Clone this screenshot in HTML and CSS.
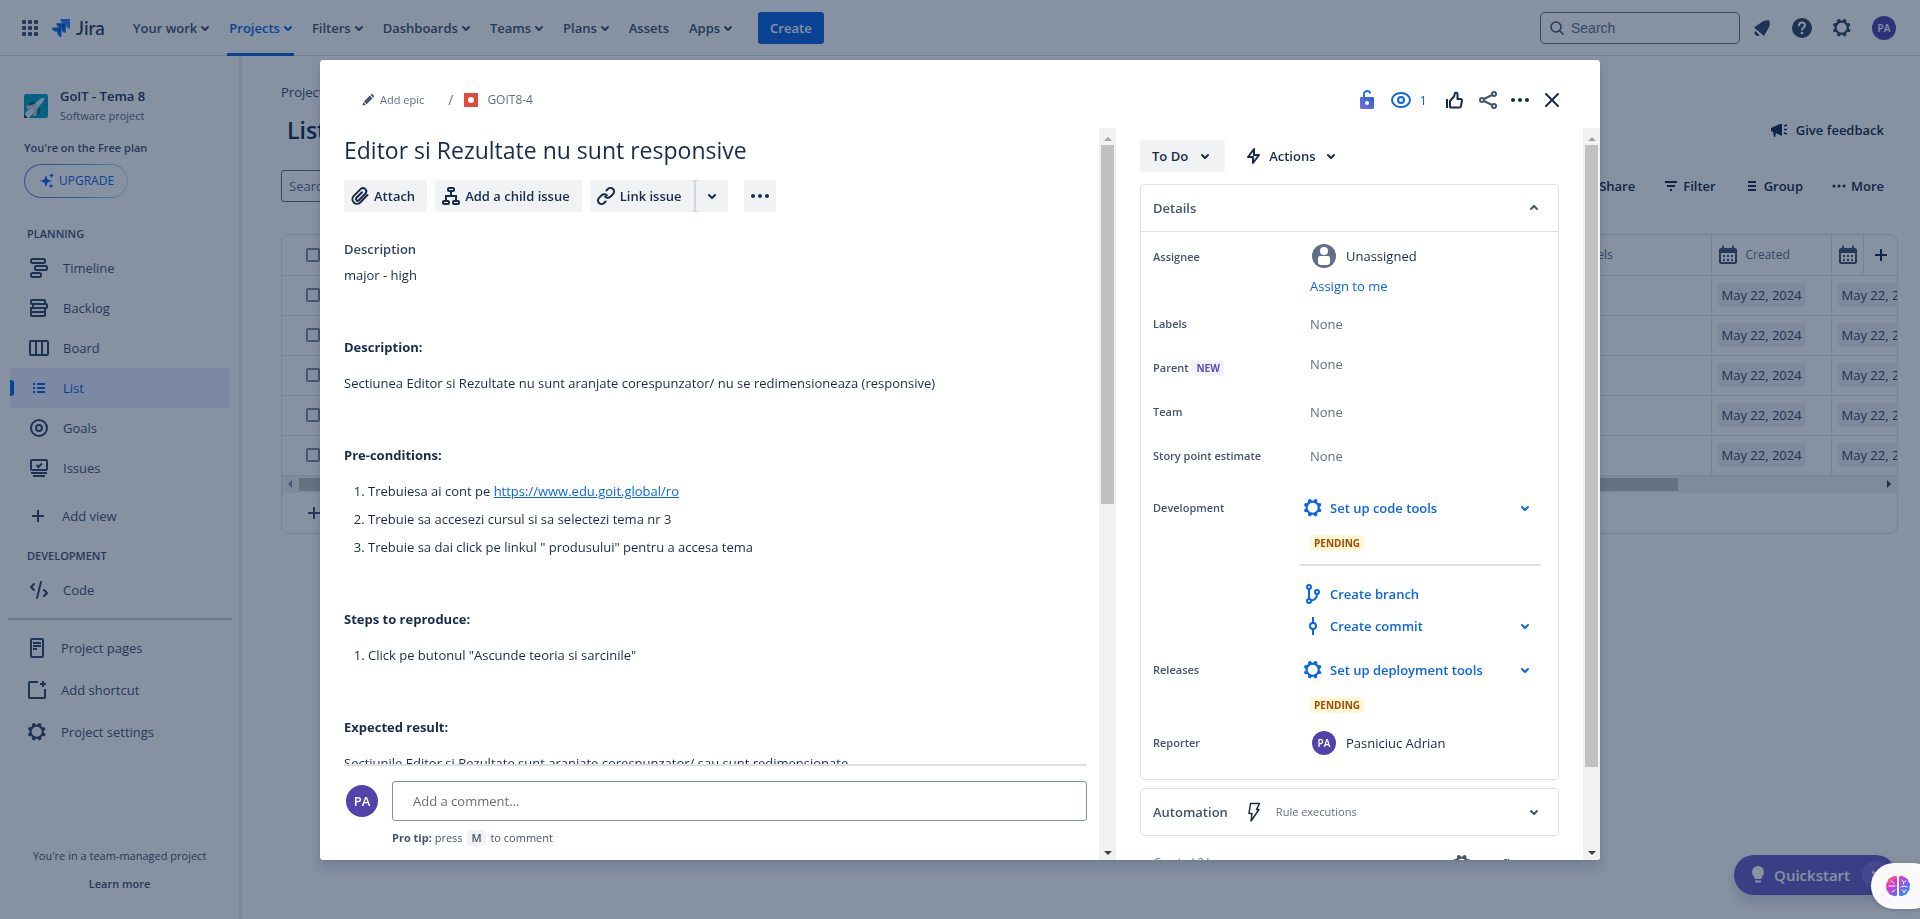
FILE: index.html
```html
<!DOCTYPE html>
<html lang="en">
<head>
<meta charset="utf-8">
<title>GOIT8-4 - Jira</title>
<link rel="stylesheet" href="styles.css">
</head>
<body>
<svg class="sprite" aria-hidden="true">
  <symbol id="chevron" viewBox="0 0 24 24"><path fill="currentColor" d="M8.292 10.293a1.009 1.009 0 000 1.419l2.939 2.965c.218.215.5.322.779.322s.556-.107.769-.322l2.93-2.955a1.01 1.01 0 000-1.419.987.987 0 00-1.406 0l-2.298 2.317-2.307-2.327a.99.99 0 00-1.406 0z"/></symbol>
  <symbol id="gear" viewBox="0 0 24 24"><path fill="currentColor" fill-rule="evenodd" d="M11.701 16.7a5.002 5.002 0 110-10.003 5.002 5.002 0 010 10.004m8.368-3.117a1.995 1.995 0 01-1.346-1.885c0-.876.563-1.613 1.345-1.885a.48.48 0 00.315-.574 8.947 8.947 0 00-.836-1.993.477.477 0 00-.598-.195 2.04 2.04 0 01-1.29.08 1.988 1.988 0 01-1.404-1.395 2.04 2.04 0 01.076-1.297.478.478 0 00-.196-.597 8.98 8.98 0 00-1.975-.826.479.479 0 00-.574.314 1.995 1.995 0 01-1.885 1.346 1.994 1.994 0 01-1.884-1.345.482.482 0 00-.575-.315c-.708.2-1.379.485-2.004.842a.47.47 0 00-.198.582A2.002 2.002 0 014.445 7.06a.478.478 0 00-.595.196 8.946 8.946 0 00-.833 1.994.48.48 0 00.308.572 1.995 1.995 0 011.323 1.877c0 .867-.552 1.599-1.324 1.877a.479.479 0 00-.308.57 8.99 8.99 0 00.723 1.79.477.477 0 00.624.194c.595-.273 1.343-.264 2.104.238.117.077.225.185.302.3.527.8.512 1.58.198 2.188a.473.473 0 00.168.628 8.946 8.946 0 002.11.897.474.474 0 00.57-.313 1.995 1.995 0 011.886-1.353c.878 0 1.618.567 1.887 1.353a.475.475 0 00.57.313 8.964 8.964 0 002.084-.883.473.473 0 00.167-.631c-.318-.608-.337-1.393.191-2.195.077-.116.185-.225.302-.302.772-.511 1.527-.513 2.125-.23a.477.477 0 00.628-.19 8.925 8.925 0 00.728-1.793.478.478 0 00-.314-.573"/></symbol>
  <symbol id="dots" viewBox="0 0 24 24"><g fill="currentColor"><circle cx="5" cy="12" r="2"/><circle cx="12" cy="12" r="2"/><circle cx="19" cy="12" r="2"/></g></symbol>
  <symbol id="plus" viewBox="0 0 24 24"><path d="M12 6v12M6 12h12" fill="none" stroke="currentColor" stroke-width="2"/></symbol>
  <symbol id="calendar" viewBox="0 0 24 24"><path fill="currentColor" fill-rule="evenodd" d="M5 5h1V3.500a1 1 0 012 0V5h8V3.500a1 1 0 012 0V5h1a2 2 0 012 2v12a2 2 0 01-2 2H5a2 2 0 01-2-2V7a2 2 0 012-2zm0 5v9h14v-9zm2 2h2v2H7zm4 0h2v2h-2zm4 0h2v2h-2zm-8 4h2v2H7zm4 0h2v2h-2zm4 0h2v2h-2z"/></symbol>
</svg>

<div class="app">
  <header class="topnav">
    <svg class="icon" viewBox="0 0 24 24" fill="#44546f"><rect x="4" y="4" width="4" height="4" rx="1"/><rect x="10" y="4" width="4" height="4" rx="1"/><rect x="16" y="4" width="4" height="4" rx="1"/><rect x="4" y="10" width="4" height="4" rx="1"/><rect x="10" y="10" width="4" height="4" rx="1"/><rect x="16" y="10" width="4" height="4" rx="1"/><rect x="4" y="16" width="4" height="4" rx="1"/><rect x="10" y="16" width="4" height="4" rx="1"/><rect x="16" y="16" width="4" height="4" rx="1"/></svg>
    <a class="brand" href="#">
      <svg width="18" height="18" viewBox="0 0 18 18"><defs><linearGradient id="lg" x1="1" y1="0" x2="0" y2="1"><stop offset="0" stop-color="#0052cc"/><stop offset="1" stop-color="#2684ff"/></linearGradient></defs><path fill="#2684ff" d="M8.500 0H18v9.500a4 4 0 01-4-4V4.300h-1.500a4 4 0 01-4-4z"/><path fill="url(#lg)" d="M4.300 4.300h9.400v9.400a4 4 0 01-4-4V8.400H8.400a4 4 0 01-4.100-4.100z"/><path fill="url(#lg)" d="M0 8.500h9.400V18a4 4 0 01-4.100-4v-1.500H4a4 4 0 01-4-4z"/></svg>
      <span>Jira</span>
    </a>
    <nav class="mainmenu">
      <a href="#">Your work<svg><use href="#chevron"/></svg></a>
      <a href="#" class="current">Projects<svg><use href="#chevron"/></svg></a>
      <a href="#">Filters<svg><use href="#chevron"/></svg></a>
      <a href="#">Dashboards<svg><use href="#chevron"/></svg></a>
      <a href="#">Teams<svg><use href="#chevron"/></svg></a>
      <a href="#">Plans<svg><use href="#chevron"/></svg></a>
      <a href="#">Assets</a>
      <a href="#">Apps<svg><use href="#chevron"/></svg></a>
    </nav>
    <button class="create">Create</button>
    <div class="tools">
      <label class="search"><svg class="icon" viewBox="0 0 24 24" fill="none" stroke="#44546f" stroke-width="1.500"><circle cx="11" cy="11" r="5"/><path d="M15 15l3 3" stroke-linecap="round"/></svg><input type="text" placeholder="Search" aria-label="Search"></label>
      <div class="toolicons">
        <svg class="icon" viewBox="0 0 24 24" fill="#344563"><path d="M4 11.500L13 5.200q3-1.500 6.500-.8 1 3-.4 6.600L14 20z"/><path d="M5.500 15l4 4a2.800 2.800 0 01-4-4z"/></svg>
        <svg class="icon" viewBox="0 0 24 24"><circle cx="12" cy="12" r="10" fill="#344563"/><path d="M9 9.500a3 3 0 116 0c0 2-3 2-3 4.300" fill="none" stroke="#fff" stroke-width="2" stroke-linecap="round"/><circle cx="12" cy="17" r="1.300" fill="#fff"/></svg>
        <svg class="icon slate"><use href="#gear"/></svg>
        <span class="avatar">PA</span>
      </div>
    </div>
  </header>

  <div class="workspace">
    <aside class="sidebar">
      <div class="project">
        <svg width="24" height="24" viewBox="0 0 24 24"><rect width="24" height="24" rx="2" fill="#00a3bf"/><path d="M0 24L2 18 15 6q4-3 5-2 1 1-2 5L5 24z" fill="#deebff"/><path d="M2 12l11-2-3 4-7 1zM12 22l2-11-4 4-1 7z" fill="#c1c7d0"/><path d="M5 9l5-1 1 1-5 2zM14 20l1-6 1 1-1 5z" fill="#253858"/><path d="M0 20l4 4H0z" fill="#253858"/></svg>
        <div><strong>GoIT - Tema 8</strong><small>Software project</small></div>
      </div>
      <p class="plan">You're on the Free plan</p>
      <button class="upgrade"><svg width="16" height="16" viewBox="0 0 16 16" fill="#0c66e4"><path d="M7 2l1.600 4.400L13 8l-4.400 1.600L7 14 5.400 9.600 1 8l4.400-1.600z"/><path d="M12.500 0l.8 1.700 1.700.8-1.700.8-.8 1.700-.8-1.700-1.700-.8 1.700-.8zM12 10.500l.7 1.800 1.800.7-1.800.7-.7 1.800-.7-1.800-1.800-.7 1.800-.7z"/></svg>UPGRADE</button>
      <h2 class="planning">PLANNING</h2>
      <nav class="sidemenu">
        <a href="#"><svg viewBox="0 0 24 24" fill="none" stroke="currentColor" stroke-width="2"><rect x="4" y="3" width="14" height="4" rx="1.500"/><rect x="8" y="10" width="12" height="4" rx="1.500"/><rect x="4" y="17" width="10" height="4" rx="1.500"/></svg>Timeline</a>
        <a href="#"><svg viewBox="0 0 24 24" fill="none" stroke="currentColor" stroke-width="2"><rect x="4" y="4" width="14" height="4" rx="1"/><rect x="6" y="8" width="14" height="4" rx="1"/><path d="M4 12h14v7a1 1 0 01-1 1H5a1 1 0 01-1-1zM4 16h14"/></svg>Backlog</a>
        <a href="#"><svg viewBox="0 0 24 24" fill="none" stroke="currentColor" stroke-width="2"><rect x="3" y="5" width="18" height="14" rx="1"/><path d="M9 5v14M15 5v14"/></svg>Board</a>
        <a href="#" class="selected"><svg viewBox="0 0 24 24" fill="none" stroke="currentColor" stroke-width="2"><path d="M10 8h8M10 12h8M10 16h8M6 8h2M6 12h2M6 16h2"/></svg>List</a>
        <a href="#"><svg viewBox="0 0 24 24" fill="none" stroke="currentColor" stroke-width="2"><circle cx="12" cy="12" r="8"/><circle cx="12" cy="12" r="3"/></svg>Goals</a>
        <a href="#"><svg viewBox="0 0 24 24" fill="none" stroke="currentColor" stroke-width="2"><rect x="4" y="4" width="16" height="10" rx="1"/><path d="M9.500 9l2 2 3.500-3.500M4 17h16M6 20h12"/></svg>Issues</a>
        <a href="#" class="addview"><svg><use href="#plus"/></svg>Add view</a>
      </nav>
      <h2>DEVELOPMENT</h2>
      <nav class="sidemenu code">
        <a href="#"><svg viewBox="0 0 24 24" fill="none" stroke="currentColor" stroke-width="2" stroke-linecap="round"><path d="M7 6L4 9l3 3M17 12l3 3-3 3M14 4L10 20"/></svg>Code</a>
      </nav>
      <hr>
      <nav class="sidemenu shortcuts">
        <a href="#"><svg viewBox="0 0 24 24" fill="none" stroke="currentColor" stroke-width="2"><rect x="6" y="3" width="12" height="18" rx="1"/><path d="M8 7h8M8 10h8M8 13h4"/></svg>Project pages</a>
        <a href="#"><svg viewBox="0 0 24 24" fill="none" stroke="currentColor" stroke-width="2"><path d="M13 4H5a1 1 0 00-1 1v14a1 1 0 001 1h14a1 1 0 001-1v-8M18 3v6M15 6h6"/></svg>Add shortcut</a>
        <a href="#"><svg><use href="#gear"/></svg>Project settings</a>
      </nav>
      <footer><p>You're in a team-managed project</p><a href="#">Learn more</a></footer>
    </aside>

    <main class="list">
      <div class="crumb">Projects</div>
      <div class="listhead"><h1>List</h1>
        <button class="plain"><svg class="icon" viewBox="0 0 24 24" fill="#172b4d"><path d="M4 10l9-4h2v12l-2-1-9-4z"/><path d="M6 14l3 1-1 4H7z"/><path d="M17 8l3-1M17 11.500h3M17 15l3 1" stroke="#172b4d" stroke-width="1.500"/></svg>Give feedback</button>
      </div>
      <div class="toolbar">
        <input type="text" placeholder="Search list" aria-label="Search list">
        <div class="actions">
          <button class="plain">Share</button>
          <button class="plain"><svg viewBox="0 0 24 24"><path d="M6 8h12M8 12h8M11 16h2" stroke="currentColor" stroke-width="2"/></svg>Filter</button>
          <button class="plain"><svg viewBox="0 0 24 24"><path d="M8 8h8M8 12h8M8 16h8" stroke="currentColor" stroke-width="2"/></svg>Group</button>
          <button class="plain"><svg viewBox="0 0 24 24" fill="currentColor"><circle cx="7" cy="12" r="1.500"/><circle cx="12" cy="12" r="1.500"/><circle cx="17" cy="12" r="1.500"/></svg>More</button>
        </div>
      </div>
      <div class="gridbox">
        <button class="addcol" aria-label="Add column"><svg class="icon"><use href="#plus"/></svg></button>
        <table>
          <thead><tr><th class="check"><input type="checkbox" aria-label="Select all"></th><th></th><th class="labels">Labels</th><th class="date"><span><svg class="icon"><use href="#calendar"/></svg>Created</span></th><th class="date"><span><svg class="icon"><use href="#calendar"/></svg></span></th></tr></thead>
          <tbody>
            <tr><td><input type="checkbox" aria-label="Select row 1"></td><td></td><td></td><td><span class="day">May 22, 2024</span></td><td><span class="day">May 22, 2024</span></td></tr>
            <tr><td><input type="checkbox" aria-label="Select row 2"></td><td></td><td></td><td><span class="day">May 22, 2024</span></td><td><span class="day">May 22, 2024</span></td></tr>
            <tr><td><input type="checkbox" aria-label="Select row 3"></td><td></td><td></td><td><span class="day">May 22, 2024</span></td><td><span class="day">May 22, 2024</span></td></tr>
            <tr><td><input type="checkbox" aria-label="Select row 4"></td><td></td><td></td><td><span class="day">May 22, 2024</span></td><td><span class="day">May 22, 2024</span></td></tr>
            <tr><td><input type="checkbox" aria-label="Select row 5"></td><td></td><td></td><td><span class="day">May 22, 2024</span></td><td><span class="day">May 22, 2024</span></td></tr>
          </tbody>
        </table>
        <div class="hscroll"><i class="left"></i><b></b><i class="right"></i></div>
        <button class="addrow" aria-label="Create issue"><svg class="icon"><use href="#plus"/></svg></button>
      </div>
    </main>
  </div>
  <button class="quickstart"><svg width="24" height="24" viewBox="0 0 24 24" fill="#fff"><path d="M12 3a6 6 0 016 6c0 2.500-1.500 3.500-2.200 5.500-.2.900-.6 1.500-1.300 1.500h-5c-.7 0-1.100-.6-1.300-1.500C7.500 12.500 6 11.500 6 9a6 6 0 016-6zM9 17.500h6v1.500q0 .5-.5.500h-5q-.5 0-.5-.5z"/></svg>Quickstart<span><svg width="24" height="24" viewBox="0 0 24 24"><path d="M8.500 8.500l7 7M15.500 8.500l-7 7" stroke="#fff" stroke-width="2.500"/></svg></span></button>
</div>

<div class="blanket">
  <section class="modal" role="dialog" aria-label="GOIT8-4">
    <header class="modalhead">
      <div class="path">
        <a href="#" class="epic"><svg width="16" height="16" viewBox="0 0 16 16" fill="#44546f"><path d="M3.300 9.600L10 2.900l3.200 3.200-6.700 6.700zM10.800 2.100l.6-.6a1.300 1.300 0 011.800 0l1.400 1.400a1.300 1.300 0 010 1.800l-.6.600zM2.800 10.500l2.800 2.800-3.600 1.100a.4.400 0 01-.4-.4z"/></svg>Add epic</a>
        <span>/</span>
        <svg width="14" height="14" viewBox="0 0 14 14"><rect width="14" height="14" rx="1" fill="#e5493a"/><circle cx="7" cy="7" r="3" fill="#fff"/></svg>
        <a href="#" class="key">GOIT8-4</a>
      </div>
      <div class="headtools">
        <button aria-label="Restrictions"><svg class="icon" viewBox="0 0 24 24"><defs><linearGradient id="lk" x1="1" y1="0" x2="0" y2="1"><stop offset=".2" stop-color="#3367d6"/><stop offset="1" stop-color="#7f6bdc"/></linearGradient></defs><path d="M9 11V6a3.200 3.200 0 016.300-.6" fill="none" stroke="#2f6fe4" stroke-width="2"/><path fill="url(#lk)" fill-rule="evenodd" d="M6 9h12a1 1 0 011 1v9.500a1.500 1.500 0 01-1.500 1.500h-11A1.500 1.500 0 015 19.500V10a1 1 0 011-1zm6 4a2 2 0 100 4 2 2 0 000-4z"/></svg></button>
        <button class="watch" aria-label="Watchers"><svg class="icon" viewBox="0 0 24 24" fill="none" stroke="currentColor" stroke-width="2"><ellipse cx="12" cy="12" rx="9" ry="7"/><circle cx="12" cy="12" r="3"/></svg>1</button>
        <button aria-label="Vote"><svg class="icon" viewBox="0 0 24 24" fill="none" stroke="currentColor" stroke-width="2" stroke-linejoin="round"><path d="M8 19V13l4-4.500 1-3.500q2-1 2.500 1V11h3a1.500 1.500 0 011.500 1.800l-1 5q-.3 1.700-1.500 1.700H9z"/><path d="M5 11v9"/></svg></button>
        <button class="soft" aria-label="Share"><svg class="icon" viewBox="0 0 24 24" fill="none" stroke="currentColor" stroke-width="2"><circle cx="6" cy="12" r="2"/><circle cx="18" cy="6" r="2"/><circle cx="18" cy="18" r="2"/><path d="M8 11l8-4M8 13l8 4"/></svg></button>
        <button aria-label="Actions"><svg class="icon"><use href="#dots"/></svg></button>
        <button aria-label="Close"><svg class="icon" viewBox="0 0 24 24" fill="none" stroke="currentColor" stroke-width="2" stroke-linecap="round"><path d="M6 6l12 12M18 6L6 18"/></svg></button>
      </div>
    </header>

    <div class="modalbody">
      <div class="issue">
        <div class="issuescroll">
          <h1>Editor si Rezultate nu sunt responsive</h1>
          <div class="quick">
            <button class="gray"><svg class="icon" viewBox="0 0 24 24" fill="none" stroke="currentColor" stroke-width="2" stroke-linecap="round"><path d="M19.500 11l-7.300 7.500a4.600 4.600 0 01-6.600-6.400l7.200-7.200a3.300 3.300 0 014.700 4.600l-6.700 6.800a1.700 1.700 0 01-2.500-2.300l5.700-5.800"/></svg>Attach</button>
            <button class="gray"><svg class="icon" viewBox="0 0 24 24" fill="none" stroke="currentColor" stroke-width="2"><rect x="9" y="4" width="6" height="3" rx="1"/><rect x="4" y="17" width="6" height="3" rx="1"/><rect x="14" y="17" width="6" height="3" rx="1"/><path d="M12 7v5M7 17v-5h10v5"/></svg>Add a child issue</button>
            <div class="split"><button class="gray"><svg class="icon" viewBox="0 0 24 24" fill="none" stroke="currentColor" stroke-width="2" stroke-linecap="round"><path d="M12.800 11.200a3.600 3.600 0 00-5.100 0L5 13.900a3.600 3.600 0 005.100 5.100l1.500-1.500"/><path d="M11.200 12.800a3.600 3.600 0 005.100 0L19 10.100A3.600 3.600 0 0013.900 5l-1.500 1.500"/></svg>Link issue</button><button class="gray caret" aria-label="Link options"><svg class="icon"><use href="#chevron"/></svg></button></div>
            <button class="gray more" aria-label="More"><svg class="icon"><use href="#dots"/></svg></button>
          </div>
          <h2>Description</h2>
          <div class="doc">
            <p>major - high</p><p></p>
            <p><strong>Description:</strong></p>
            <p>Sectiunea Editor si Rezultate nu sunt aranjate corespunzator/ nu se redimensioneaza (responsive)</p><p></p>
            <p><strong>Pre-conditions:</strong></p>
            <ol><li>Trebuiesa ai cont pe <a href="#">https://www.edu.goit.global/ro</a></li><li>Trebuie sa accesezi cursul si sa selectezi tema nr 3</li><li>Trebuie sa dai click pe linkul " produsului" pentru a accesa tema</li></ol><p></p>
            <p><strong>Steps to reproduce:</strong></p>
            <ol><li>Click pe butonul "Ascunde teoria si sarcinile"</li></ol><p></p>
            <p><strong>Expected result:</strong></p>
            <p>Sectiunile Editor si Rezultate sunt aranjate corespunzator/ sau sunt redimensionate</p>
          </div>
        </div>
        <div class="comment">
          <span class="avatar big">PA</span>
          <div><input type="text" placeholder="Add a comment…" aria-label="Add a comment"><p><b>Pro tip:</b> press <kbd>M</kbd> to comment</p></div>
        </div>
      </div>
      <div class="vscroll"><i class="up"></i><b class="short"></b><i class="down"></i></div>

      <div class="side">
        <div class="status"><button class="gray">To Do<svg><use href="#chevron"/></svg></button><button class="plain"><svg class="icon" viewBox="0 0 24 24" fill="none" stroke="currentColor" stroke-width="2" stroke-linejoin="round"><path d="M13 5l-6 8h5v6l6-8h-5z"/></svg>Actions<svg><use href="#chevron"/></svg></button></div>
        <section class="card">
          <button class="cardhead">Details<svg class="flip"><use href="#chevron"/></svg></button>
          <div class="fields">
            <div class="row assignee"><h3>Assignee</h3><div><p class="person"><svg class="icon" viewBox="0 0 24 24"><circle cx="12" cy="12" r="12" fill="#626f86"/><circle cx="12" cy="7" r="4" fill="#fff"/><path d="M6 14a2 2 0 012-2h8a2 2 0 012 2v4a3 3 0 01-3 3H9a3 3 0 01-3-3z" fill="#fff"/></svg>Unassigned</p><a href="#" class="me">Assign to me</a></div></div>
            <div class="row"><h3>Labels</h3><p class="none">None</p></div>
            <div class="row"><h3>Parent <span class="new">NEW</span></h3><p class="none raised">None</p></div>
            <div class="row"><h3>Team</h3><p class="none">None</p></div>
            <div class="row"><h3>Story point estimate</h3><p class="none">None</p></div>
            <div class="row dev"><h3>Development</h3><div>
              <button class="tool"><svg class="icon"><use href="#gear"/></svg><span>Set up code tools</span><svg class="end"><use href="#chevron"/></svg></button>
              <span class="pending">PENDING</span>
              <hr>
              <button class="tool"><svg class="icon" viewBox="0 0 24 24" fill="none" stroke="currentColor" stroke-width="2"><circle cx="8" cy="5" r="2"/><circle cx="8" cy="19" r="2"/><circle cx="16" cy="10" r="2"/><path d="M8 7v10M16 12q0 6-6 6.500"/></svg><span>Create branch</span></button>
              <button class="tool"><svg class="icon" viewBox="0 0 24 24" fill="none" stroke="currentColor" stroke-width="2"><circle cx="12" cy="12" r="3"/><path d="M12 3v6M12 15v6"/></svg><span>Create commit</span><svg class="end"><use href="#chevron"/></svg></button>
            </div></div>
            <div class="row rel"><h3>Releases</h3><div><button class="tool"><svg class="icon"><use href="#gear"/></svg><span>Set up deployment tools</span><svg class="end"><use href="#chevron"/></svg></button><span class="pending">PENDING</span></div></div>
            <div class="row rep"><h3>Reporter</h3><p class="person"><span class="avatar">PA</span>Pasniciuc Adrian</p></div>
          </div>
        </section>
        <button class="card auto"><span>Automation</span><svg class="icon bolt" viewBox="0 0 24 24" fill="none" stroke="#172b4d" stroke-width="1.500" stroke-linejoin="round"><path d="M8.500 3.500h9l-3 6H17L9 21l1-7.500H7z"/></svg><small>Rule executions</small><svg class="end"><use href="#chevron"/></svg></button>
        <footer class="meta"><span>Created 2 hours ago</span><button class="plain"><svg class="icon"><use href="#gear"/></svg>Configure</button></footer>
      </div>
      <div class="vscroll"><i class="up"></i><b class="long"></b><i class="down"></i></div>
    </div>
  </section>
</div>

<button class="assistant" aria-label="Assistant"><svg width="26" height="24" viewBox="0 0 26 24"><defs><linearGradient id="br" x1="0" y1="0" x2="1" y2="1"><stop offset="0" stop-color="#ff8a2b"/><stop offset=".3" stop-color="#e934c8"/><stop offset=".6" stop-color="#7a5cf5"/><stop offset="1" stop-color="#17a8f5"/></linearGradient></defs><path fill="url(#br)" d="M12 2.500v19q-3 1.500-5.500-.5-3-.3-3.300-3.500Q.5 16 1.500 13q-1.500-3 1-5 0-3.500 3.500-4.500 2.500-2.500 6-1zM14 2.500v19q3 1.500 5.500-.5 3-.3 3.300-3.500Q25.500 16 24.500 13q1.500-3-1-5 0-3.500-3.500-4.500-2.500-2.500-6-1z"/><path d="M4 12h6M6 7l3 2M7 18l3-2M17 6l1.500 2.500L21 7M18.500 8.500V10M16 13l3-1 3 1M17 16l2 1.500 2-1.500M19 17.500V19" fill="none" stroke="#fff" stroke-width="1" stroke-linecap="round"/></svg></button>
</body>
</html>
```

FILE: styles.css
```css
*{box-sizing:border-box}
body{margin:0;font:13px/20px "Open Sans","Noto Sans",sans-serif;color:#172b4d;background:#fff}
h1,h2,h3,p,ol{margin:0;padding:0;font-size:inherit}
a{color:inherit;text-decoration:none}
button,input{font:inherit;color:inherit;border:0;background:none;padding:0;margin:0}
button{display:flex;align-items:center;font-weight:600;white-space:nowrap}
hr{border:0;margin:0}
svg{flex:none;width:24px;height:24px;display:block}
.sprite{display:none}
.slate{color:#344563}
.avatar{display:flex;align-items:center;justify-content:center;flex:none;width:24px;height:24px;border-radius:50%;background:#5243aa;color:#fff;font-size:10px;font-weight:600}
.avatar.big{width:32px;height:32px;font-size:13px}

.app{display:flex;flex-direction:column;height:100vh;overflow:hidden}
.topnav{display:flex;align-items:center;height:56px;flex:none;padding:0 24px 0 18px;border-bottom:1px solid #dcdfe4;color:#44546f}
.brand{display:flex;align-items:center;gap:6px;margin-left:10px;font:500 19px/24px Lato,sans-serif;color:#253858}
.brand svg{width:18px;height:18px}
.mainmenu{display:flex;gap:16px;margin-left:26px;height:56px;font-weight:600}
.mainmenu a{display:flex;align-items:center;padding:0 2px;white-space:nowrap}
.mainmenu svg{margin:0 -8px 0 -4px}
.mainmenu .current{color:#0c66e4;border-bottom:3px solid #0c66e4;padding-top:3px}
.create{height:32px;margin-left:24px;padding:0 12px;border-radius:3px;background:#0c66e4;color:#fff}
.tools{display:flex;align-items:center;margin-left:auto;gap:10px}
.search{display:flex;align-items:center;width:200px;height:32px;border:1px solid #626f86;border-radius:5px;padding-left:4px}
.search input{width:150px;margin-left:2px;font:14px "Liberation Sans",sans-serif}
input::placeholder{color:#626f86;opacity:1}
.toolicons{display:flex;align-items:center;gap:16px}
.toolicons .avatar{margin-left:2px}

.workspace{display:flex;flex:1;min-height:0}
.sidebar{display:flex;flex-direction:column;width:242px;flex:none;border-right:3px solid #edeff2;color:#44546f;padding-top:29px}
.project{display:flex;align-items:center;gap:12px;padding-left:24px;height:42px}
.project strong,.project small{display:block}
.project strong{font-weight:600;color:#253858}
.project small{font-size:11px;color:#626f86}
.plan{padding:11px 0 0 24px;font-size:11px;font-weight:600}
.upgrade{align-self:flex-start;margin:6px 0 0 24px;height:34px;padding:0 13px 0 14px;gap:4px;border:1px solid transparent;border-radius:17px;font-size:12px;font-weight:400;color:#0c66e4;background:linear-gradient(#fff,#fff) padding-box,linear-gradient(90deg,#8b6be8,#4c9aff,#c6e6ff) border-box}
.upgrade svg{width:16px;height:16px}
.sidebar h2{padding-left:27px;font-size:11px;line-height:16px;font-weight:600}
.sidebar .planning{margin:28px 0 6px}
.sidemenu{padding:0 9px 0 10px}
.sidemenu a{position:relative;display:flex;align-items:center;gap:12px;height:40px;padding-left:17px;border-radius:3px}
.sidemenu svg{color:#344563}
.sidemenu .selected,.sidemenu .selected svg{color:#0c66e4}
.sidemenu .selected{background:#e9f2ff}
.selected::before{content:"";position:absolute;left:0;top:12px;width:4px;height:16px;background:#0c66e4;border-radius:0 3px 3px 0}
.sidemenu .addview{margin:8px 0 12px;padding-left:16px}
.sidemenu.code{padding-top:6px;padding-bottom:8px}
.sidebar hr{height:2px;margin:0 7px 0 8px;background:#cfd4dc}
.shortcuts{padding-top:7px}
.shortcuts a{height:42px;padding-left:15px}
.sidebar footer{margin-top:auto;padding-bottom:25px;text-align:center;font-size:11px}
.sidebar footer a{display:block;margin-top:8px;font-weight:600}

.list{flex:1;min-width:0;padding:26px 22px 0 39px}
.crumb{color:#44546f}
.listhead{display:flex;justify-content:space-between;align-items:center;height:32px;margin-top:12px;padding:0 14px 0 6px}
.listhead h1{font-size:23px;font-weight:600}
.listhead .plain{gap:5px}
.toolbar{display:flex;justify-content:space-between;margin-top:24px;padding-right:14px}
.toolbar input{width:180px;height:32px;border:1px solid #626f86;border-radius:3px;padding:0 7px;color:#626f86}
.actions{display:flex;gap:24px}
.gridbox{position:relative;margin-top:32px;border:1px solid #dfe1e6;border-radius:8px;overflow:hidden}
.gridbox table{width:calc(100% + 54px);table-layout:fixed;border-collapse:collapse}
.gridbox th,.gridbox td{height:40px;padding:0 6px;border-bottom:1px solid #e4e7eb;text-align:left;font-weight:500;white-space:nowrap}
.gridbox thead th{font-size:12px;color:#626f86}
.gridbox .check{width:48px}
.gridbox .labels{width:146px;padding-left:12px}
.gridbox .date{width:120px}
.gridbox th:nth-child(n+4),.gridbox td:nth-child(n+4){border-left:1px solid #e4e7eb}
.gridbox th span{display:flex;align-items:center;gap:6px;margin-left:-2px}
.gridbox th svg{color:#44546f}
.gridbox input[type=checkbox]{appearance:none;display:block;width:14px;height:14px;margin-left:18px;border:2px solid #8590a2;border-radius:2px}
.day{display:inline-block;height:24px;padding:2px 4px;border-radius:3px;background:#f0f1f4;color:#344563;font-weight:400}
.addcol{position:absolute;right:0;top:0;width:34px;height:40px;justify-content:center;background:#fff;border-left:1px solid #e4e7eb}
.hscroll{display:flex;align-items:center;height:17px;background:#f1f1f1;padding:0 6px}
.hscroll b{height:13px;width:86%;margin-left:7px;background:#c1c1c1}
.hscroll .right{margin-left:auto}
.hscroll i,.vscroll i{width:0;height:0;border:4px solid transparent}
.hscroll .left{border-right-color:#8590a2;border-left:0}
.hscroll .right{border-left-color:#404040;border-right:0}
.addrow{height:40px;padding-left:20px;color:#44546f}
.quickstart{position:absolute;right:24px;bottom:24px;height:40px;padding:0 6px 0 12px;gap:4px;border-radius:20px;background:#6e5dc6;color:#fff;font-size:15px;box-shadow:0 8px 12px #091e4226}
.quickstart span{display:flex;margin-left:8px;border-radius:50%;background:#8270db;padding:2px}

.blanket{position:fixed;inset:0;display:flex;justify-content:center;padding:60px 60px 59px;background:rgba(9,30,66,.49)}
.modal{display:flex;flex-direction:column;width:100%;max-width:1280px;background:#fff;border-radius:3px;overflow:hidden;box-shadow:0 8px 12px #091e4226,0 0 1px #091e424f}
.modalhead{display:flex;justify-content:space-between;align-items:center;height:68px;flex:none;padding:12px 36px 0 41px}
.path{display:flex;align-items:center;font-size:11px;color:#626f86}
.path svg{width:14px;height:14px}
.path .epic{display:flex;align-items:center;gap:5px}
.path span{margin:0 11px 0 24px;font-size:14px}
.path .key{margin-left:9px;font-size:12px}
.headtools{display:flex;gap:8px}
.headtools .watch{gap:7px;margin:0 7px 0 2px;color:#0c66e4;font-weight:400}
.headtools .soft{margin:0 0 0 2px;color:#44546f}
.modalbody{display:grid;grid-template-columns:minmax(0,779fr) 17px minmax(0,467fr) 17px;grid-template-rows:minmax(0,1fr);flex:1;min-height:0}
.issue{display:flex;flex-direction:column;min-height:0;padding:0 12px 0 24px}
.issuescroll{flex:1;min-height:0;overflow:hidden;padding-top:8px}
.issue h1{font-size:23px;line-height:28px;font-weight:500}
.quick{display:flex;gap:8px;margin-top:16px}
.gray{height:32px;padding:0 12px 0 4px;gap:2px;border-radius:3px;background:#f1f2f4}
.split{display:flex;gap:2px;background:#d0d4db;border-radius:3px}
.quick .caret,.quick .more{width:32px;padding:0;justify-content:center}
.quick .more{margin-left:8px}
.issue h2{margin:27px 0 4px;font-weight:600;color:#344563}
.doc p,.doc li{min-height:24px;line-height:24px}
.doc p+p,.doc ol,.doc ol+p{margin-top:12px}
.doc ol{padding-left:24px}
.doc li+li{margin-top:4px}
.doc a{color:#0c66e4;text-decoration:underline}
.doc strong{font-weight:700}
.comment{display:flex;gap:14px;height:96px;flex:none;border-top:2px solid #dcdfe4;padding:15px 0 0 2px}
.comment>div{flex:1}
.comment .avatar{margin-top:4px}
.comment input{display:block;width:100%;height:40px;border:1px solid #8590a2;border-radius:3px;padding:0 20px}
.comment input::placeholder{color:#6b6e76}
.comment p{margin-top:7px;font-size:11px;color:#44546f}
.comment kbd{display:inline-block;margin:0 2px;padding:0 4px;border-radius:3px;background:#f1f2f4;font:600 11px/16px "Open Sans",sans-serif}
.vscroll{display:flex;flex-direction:column;align-items:center;background:#f1f1f1}
.vscroll .up{margin:5px 0 4px;border-bottom-color:#a3a3a3;border-top-width:0;height:8px}
.vscroll b{width:13px;background:#c1c1c1}
.vscroll .short{height:49%}
.vscroll .long{height:85%}
.vscroll .down{margin:auto 0 5px;border-top-color:#404040;border-bottom:0}
.side{overflow:hidden;padding:12px 24px 0}
.status{display:flex;gap:8px}
.status .gray{padding:0 8px 0 12px;gap:5px}
.status .plain{padding:0 8px;gap:4px}
.card{width:100%;border:1px solid #dcdfe4;border-radius:4px;margin-top:12px}
.cardhead{width:100%;height:47px;justify-content:space-between;padding:0 12px;border-bottom:1px solid #dcdfe4;color:#44546f}
.flip{transform:rotate(180deg)}
.fields{padding:0 17px 14px 12px}
.row{display:grid;grid-template-columns:147px 1fr;align-items:center;min-height:44px}
.row h3{font-size:11px;font-weight:600;color:#44546f;white-space:nowrap}
.person{display:flex;align-items:center;gap:10px;padding-left:12px;height:24px}
.assignee,.dev,.rel{align-items:start}
.assignee{min-height:70px;padding-top:12px}
.assignee h3{padding-top:3px}
.me{display:block;margin:8px 0 0 10px;color:#0c66e4}
.none{padding-left:10px;color:#626f86}
.raised{padding-bottom:8px}
.new,.pending{display:inline-block;height:16px;padding:0 4px;border-radius:3px;font-size:10px;line-height:16px;font-weight:700}
.new{margin-left:1px;background:#f3f0ff;color:#5e4db2}
.pending{display:block;width:max-content;margin:11px 0 0 10px;background:#fff7d6;color:#a54800}
.dev{padding-top:14px}
.dev h3,.rel h3{padding-top:6px}
.tool{width:100%;height:32px;padding-left:1px;gap:5px;color:#0c66e4}
.end{margin-left:auto}
.tool .end{margin-right:4px}
.row hr{height:2px;margin:13px 0 12px;background:#dcdfe4}
.rel{padding-top:12px}
.rep{margin-top:8px}
.auto{height:48px;margin-top:8px;padding:0 12px;color:#44546f}
.auto .bolt{margin:0 10px 0 14px}
.auto small{font-size:11px;font-weight:400;color:#626f86}
.meta{display:flex;justify-content:space-between;padding:16px 20px 0 14px;font-size:11px;color:#626f86}
.meta button{gap:4px;font-size:13px;color:#44546f}
.assistant{position:fixed;right:-16px;bottom:10px;width:65px;height:46px;padding-left:14px;border-radius:23px;background:#fafafa;box-shadow:0 1px 4px #0003}
.assistant svg{width:26px;height:24px}
```
